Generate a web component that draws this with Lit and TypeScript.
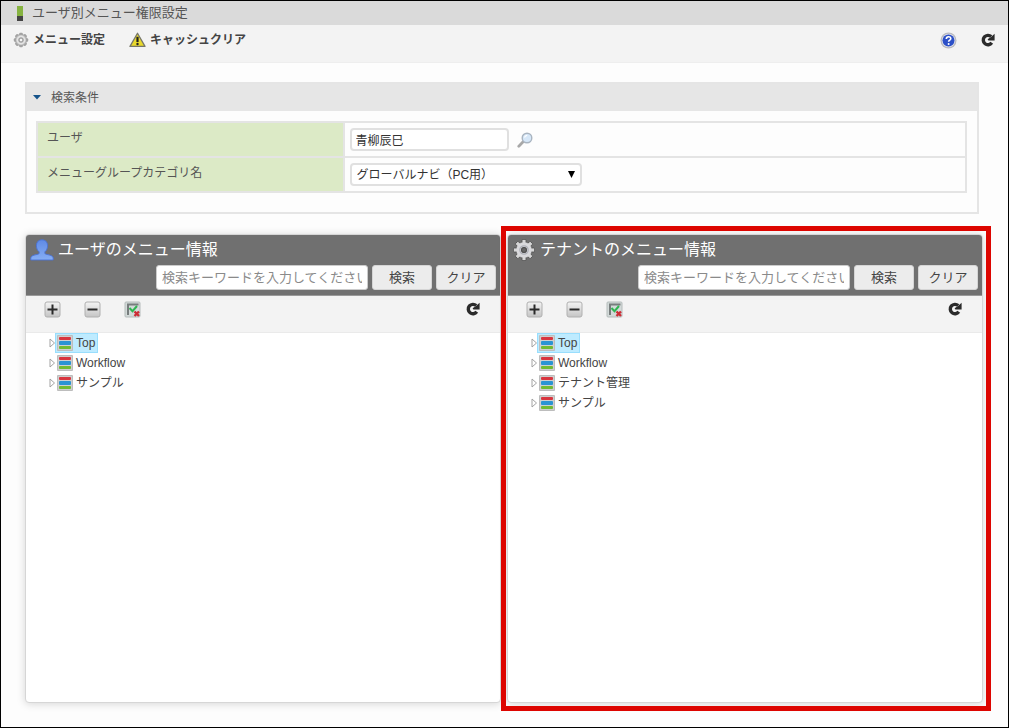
import { LitElement, html, css, svg } from "lit";
import { customElement, property } from "lit/decorators.js";

const reloadIcon = html`<svg width="14" height="14" viewBox="0 0 14 14" aria-hidden="true">
  <path d="M10.800 9.800A4.700 4.700 0 1 1 10.200 3.600" fill="none" stroke="#2b2b2b" stroke-width="3.400" />
  <path d="M13.600 0.800V7.600H7.400L6.600 6.200L10 4z" fill="#2b2b2b" />
</svg>`;

const teeth = (r: number, w: number, h: number, c: number) =>
  [0, 45, 90, 135, 180, 225, 270, 315].map(
    (a) => svg`<rect x=${c - w / 2} y=${c - r} width=${w} height=${h} rx="1" transform="rotate(${a} ${c} ${c})" />`
  );

const smallGear = html`<svg width="16" height="16" viewBox="0 0 16 16" aria-hidden="true">
  <g fill="#a2a2a2">${teeth(7.2, 3.6, 4, 8)}</g>
  <circle cx="8" cy="8" r="5.6" fill="#c9c9c9" stroke="#a5a5a5" />
  <circle cx="8" cy="8" r="3.7" fill="none" stroke="#e6e6e6" stroke-width="1.2" />
  <circle cx="8" cy="8" r="2" fill="#f5f5f5" stroke="#8f8f8f" />
</svg>`;

const largeGear = html`<svg width="22" height="22" viewBox="0 0 22 22" aria-hidden="true">
  <g fill="#d6d6d6" stroke="#4c4c4c" stroke-width="0.8">${teeth(10.6, 4, 5, 11)}</g>
  <circle cx="11" cy="11" r="5.4" fill="none" stroke="#d9d9dc" stroke-width="4.600" />
  <circle cx="11" cy="11" r="4.2" fill="none" stroke="#aeb0b8" stroke-width="1.2" />
  <circle cx="11" cy="11" r="2.5" fill="#666" stroke="#4c4c4c" />
</svg>`;

const personIcon = html`<svg width="24" height="22" viewBox="0 0 24 22" aria-hidden="true">
  <defs>
    <linearGradient id="p" x1="0" y1="0" x2="0" y2="1">
      <stop offset="0" stop-color="#5f8ae6" /><stop offset="1" stop-color="#86aef4" />
    </linearGradient>
  </defs>
  <path d="M12 .8c-3.500 0-5.600 2.300-5.600 5.700 0 2.700 1 5 2.700 6.300v1.800C7.500 16 1 15.600 .8 19v2h22.400v-2c-.2-3.400-6.700-3-8.300-4.400v-1.800c1.700-1.300 2.700-3.600 2.700-6.300C17.600 3.100 15.500 .8 12 .8z"
    fill="url(#p)" stroke="#4a72d4" stroke-width="0.9" />
</svg>`;

const warningIcon = html`<svg width="17" height="16" viewBox="0 0 17 16" aria-hidden="true">
  <path d="M8.500 1.200L16 14.400H1z" fill="#e9d92c" stroke="#77776a" stroke-width="1.3" stroke-linejoin="round" />
  <path d="M8.500 4.800v5.200" stroke="#222" stroke-width="2.200" />
  <circle cx="8.500" cy="12" r="1.200" fill="#222" />
</svg>`;

const helpIcon = html`<svg width="17" height="17" viewBox="0 0 17 17" aria-hidden="true">
  <circle cx="8.500" cy="8.500" r="8" fill="#b9bac0" />
  <circle cx="8.500" cy="8.500" r="6.800" fill="#e0e2ea" />
  <circle cx="8.500" cy="8.500" r="6" fill="#2c50c8" />
  <path d="M6.300 7c0-3 4.500-3 4.500-.5 0 1.600-2.200 1.500-2.200 3.200" fill="none" stroke="#fff" stroke-width="1.600" />
  <circle cx="8.600" cy="12" r="1" fill="#fff" />
</svg>`;

const magnifierIcon = html`<svg width="16" height="16" viewBox="0 0 16 16" aria-hidden="true">
  <path d="M6.400 9.600L1.800 14.200" stroke="#a8a8a8" stroke-width="2.800" stroke-linecap="round" />
  <circle cx="10" cy="6" r="4.800" fill="#d6e7f8" stroke="#a9b4c0" stroke-width="1.400" />
  <path d="M7.500 5.500a3 3 0 0 1 2.700-2.200" fill="none" stroke="#fff" stroke-width="1.200" />
</svg>`;

const boxIcon = (plus: boolean) => html`<svg width="17" height="17" viewBox="0 0 17 17" aria-hidden="true">
  <defs>
    <linearGradient id="b" x1="0" y1="0" x2="0" y2="1">
      <stop offset="0" stop-color="#f4f4f4" /><stop offset="1" stop-color="#c4c4c4" />
    </linearGradient>
  </defs>
  <rect x="1" y="1" width="15" height="15" rx="2" fill="url(#b)" stroke="#b0b0b0" />
  <path d=${plus ? "M3.500 8.500h10M8.500 3.500v10" : "M3.500 8.500h10"} stroke="#2a2a2a" stroke-width="2" />
</svg>`;

const checkIcon = html`<svg width="17" height="17" viewBox="0 0 17 17" aria-hidden="true">
  <rect x="1" y="1" width="15" height="15" rx="1" fill="#d3dad9" stroke="#b5bcbb" />
  <path d="M4 14V3.500h10.500" fill="none" stroke="#777d7d" stroke-width="2" />
  <path d="M5.500 7l3 3.200L13 5" fill="none" stroke="#2fb552" stroke-width="2" />
  <path d="M10.500 10.500l4.500 4.500M15 10.500l-4.500 4.500" stroke="#cc2c35" stroke-width="2.400" />
</svg>`;

const menuIcon = html`<svg width="16" height="16" viewBox="0 0 16 16" aria-hidden="true">
  <rect width="16" height="16" rx="1" fill="#bdbdbd" />
  <rect x="1" y="1" width="14" height="14" fill="#d0d0d0" />
  <rect x="2" y="2" width="12" height="3" rx="1" fill="#d8363f" />
  <rect x="2" y="6" width="12" height="4" rx="1" fill="#2b94d2" />
  <rect x="2" y="11" width="12" height="3" rx="1" fill="#72bb33" />
</svg>`;

const base = css`
  * { box-sizing: border-box; }
  svg { display: block; flex: none; }
  button, input, select { font-family: inherit; color: inherit; margin: 0; }
  button { cursor: pointer; }
  .plain { display: flex; align-items: center; border: 0; padding: 0; background: none; }
`;

@customElement("menu-panel")
class MenuPanel extends LitElement {
  @property() heading = "";
  @property() icon = "user";
  @property({ attribute: false }) items: string[] = [];

  static styles = [
    base,
    css`
      :host { display: flex; flex-direction: column; min-width: 0; position: relative; }
      :host([highlighted])::after {
        content: ""; position: absolute; inset: -8px -8px -8px -6px;
        border: 5px solid #dd0500; pointer-events: none;
      }
      .panel {
        flex: 1; display: flex; flex-direction: column; background: #fff;
        border: 1px solid #d6d6d6; border-radius: 4px; overflow: hidden;
        box-shadow: 0 1px 8px rgba(0, 0, 0, 0.16);
      }
      .head {
        background: #707070; border-bottom: 1px solid #999; color: #fff;
        padding: 4px 4px 5px;
      }
      .title {
        display: flex; align-items: center; gap: 5px; margin: 0;
        font-size: 16px; line-height: 22px; height: 22px; font-weight: 400;
      }
      .badge { width: 23px; display: flex; justify-content: center; }
      .search { display: flex; justify-content: flex-end; align-items: center; gap: 4px; padding-top: 4px; }
      .keyword {
        width: 212px; height: 25px; padding: 0 5px; border: 1px solid #ccc; border-radius: 3px;
        background: #fff; font-size: 13px; color: #333;
      }
      .keyword::placeholder { color: #8a8a8a; opacity: 1; }
      .btn {
        width: 60px; height: 25px; padding: 0; border: 1px solid #d5d5d5; border-radius: 3px;
        background: #ececec; color: #444; font-size: 13px; line-height: 20px;
      }
      .tools {
        display: flex; align-items: flex-start; gap: 23px; height: 37px; padding: 5px 20px 0 18px;
        background: #f3f3f3; border-bottom: 1px solid #eaeaea;
      }
      .reload { margin-left: auto; padding-top: 1px; }
      .tree { list-style: none; margin: 0; padding: 0 23px; font-size: 12px; line-height: 18px; }
      .row { display: flex; align-items: center; height: 20px; }
      .node {
        display: flex; align-items: center; gap: 3px; height: 20px; padding: 0 2px 0 1px;
        border: 1px solid transparent; color: #444; text-decoration: none;
      }
      .selected { background: #beebff; border-color: #99defd; }
    `,
  ];

  render() {
    return html`<section class="panel">
      <header class="head">
        <h2 class="title"><span class="badge">${this.icon === "user" ? personIcon : largeGear}</span>${this.heading}</h2>
        <div class="search">
          <input class="keyword" type="text" aria-label="検索キーワード" placeholder="検索キーワードを入力してください" />
          <button class="btn" type="button">検索</button>
          <button class="btn" type="button">クリア</button>
        </div>
      </header>
      <div class="tools">
        <button class="plain" type="button" aria-label="すべて開く">${boxIcon(true)}</button>
        <button class="plain" type="button" aria-label="すべて閉じる">${boxIcon(false)}</button>
        <button class="plain" type="button" aria-label="選択切替">${checkIcon}</button>
        <button class="plain reload" type="button" aria-label="更新">${reloadIcon}</button>
      </div>
      <ul class="tree">
        ${this.items.map(
          (name, i) => html`<li class="row">
            <svg width="6" height="10" viewBox="0 0 6 10" aria-hidden="true">
              <path d="M1 1v8L5.500 5z" fill="#fff" stroke="#999" stroke-width="0.9" />
            </svg>
            <a class="node ${i === 0 ? "selected" : ""}" href="#">${menuIcon}<span>${name}</span></a>
          </li>`
        )}
      </ul>
    </section>`;
  }
}

@customElement("app-root")
class AppRoot extends LitElement {
  static styles = [
    base,
    css`
      :host {
        display: flex; flex-direction: column; box-sizing: border-box; min-height: 100vh;
        border: 1px solid #000; background: #fdfdfd; color: #444;
        font: 12px/18px "Liberation Sans", "Noto Sans CJK JP", sans-serif;
      }
      .titlebar {
        display: flex; align-items: center; gap: 9px; height: 24px; padding: 0 16px;
        background: #dadada; color: #555;
      }
      .title { margin: 0; font-size: 13px; line-height: 20px; font-weight: 400; }
      .toolbar {
        display: flex; align-items: flex-start; gap: 24px; height: 38px; padding: 5px 13px 0 12px;
        background: #f3f3f3; border-bottom: 1px solid #eee;
      }
      .action { gap: 4px; height: 20px; font-size: 12px; line-height: 18px; font-weight: 700; color: #444; }
      .right { display: flex; gap: 24px; margin-left: auto; }
      .main { flex: 1; display: flex; flex-direction: column; gap: 20px; padding: 19px 25px 24px 24px; }
      .conditions { border: 2px solid #e5e5e5; margin-right: 4px; }
      .caption {
        display: flex; align-items: center; gap: 10px; width: 100%; height: 27px; padding: 0 6px;
        border: 0; background: #e6e6e6; font-size: 12px; line-height: 18px; color: #555;
      }
      .body { padding: 10px 10px 19px 9px; }
      .form { width: 100%; border-collapse: collapse; }
      .form th, .form td { border: 2px solid #e4e4e4; height: 35px; padding: 0 5px; }
      .form th {
        width: 33%; padding: 6px 9px; text-align: left; vertical-align: top; font-weight: 400;
        background: #dceac6; color: #555;
      }
      .field { display: flex; align-items: center; gap: 8px; }
      .control {
        height: 23px; border: 2px solid #e0e0e0; border-radius: 4px; background: #fff;
        font-size: 12px; color: #333; padding: 0 4px;
      }
      .user { width: 159px; }
      .pick { display: grid; align-items: center; width: 232px; }
      .pick > * { grid-area: 1 / 1; }
      .select { width: 100%; appearance: none; padding: 0 24px 0 5px; }
      .arrow { justify-self: end; margin-right: 7px; pointer-events: none; }
      .panels { flex: 1; display: grid; grid-template-columns: 1fr 1fr; gap: 6px; }
    `,
  ];

  render() {
    return html`
      <header class="titlebar">
        <svg width="6" height="15" viewBox="0 0 6 15" aria-hidden="true">
          <rect width="6" height="10" fill="#86b340" /><rect y="10" width="6" height="5" fill="#444" />
        </svg>
        <h1 class="title">ユーザ別メニュー権限設定</h1>
      </header>
      <nav class="toolbar">
        <button class="plain action" type="button">${smallGear}<span>メニュー設定</span></button>
        <button class="plain action" type="button">${warningIcon}<span>キャッシュクリア</span></button>
        <div class="right">
          <button class="plain action" type="button" aria-label="ヘルプ">${helpIcon}</button>
          <button class="plain action" type="button" aria-label="更新">${reloadIcon}</button>
        </div>
      </nav>
      <main class="main">
        <section class="conditions">
          <button class="caption" type="button" aria-expanded="true">
            <svg width="8" height="5" viewBox="0 0 8 5" aria-hidden="true"><path d="M0 0h8L4 4.500z" fill="#15538a" /></svg>
            検索条件
          </button>
          <div class="body">
            <table class="form">
              <tr>
                <th scope="row"><label for="user">ユーザ</label></th>
                <td>
                  <div class="field">
                    <input class="control user" id="user" type="text" value="青柳辰巳" />
                    <button class="plain" type="button" aria-label="ユーザ検索">${magnifierIcon}</button>
                  </div>
                </td>
              </tr>
              <tr>
                <th scope="row"><label for="category">メニューグループカテゴリ名</label></th>
                <td>
                  <div class="pick">
                    <select class="control select" id="category">
                      <option>グローバルナビ（PC用）</option>
                    </select>
                    <svg class="arrow" width="7" height="7" viewBox="0 0 7 7" aria-hidden="true"><path d="M0 0h7L3.500 7z" fill="#000" /></svg>
                  </div>
                </td>
              </tr>
            </table>
          </div>
        </section>
        <div class="panels">
          <menu-panel heading="ユーザのメニュー情報" icon="user" .items=${["Top", "Workflow", "サンプル"]}></menu-panel>
          <menu-panel highlighted heading="テナントのメニュー情報" icon="tenant"
            .items=${["Top", "Workflow", "テナント管理", "サンプル"]}></menu-panel>
        </div>
      </main>
    `;
  }
}
